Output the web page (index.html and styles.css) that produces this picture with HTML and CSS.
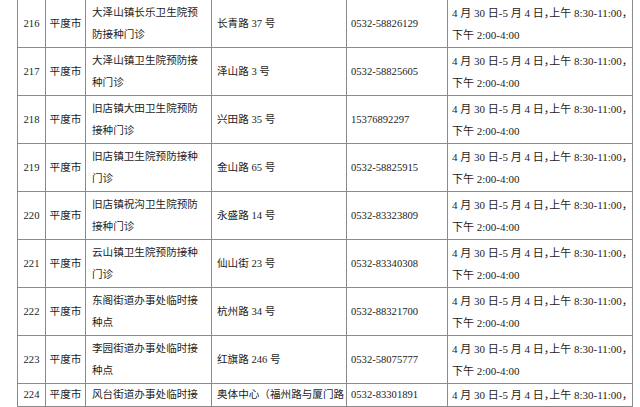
FILE: index.html
```html
<!DOCTYPE html>
<html lang="zh-CN">
<head>
<meta charset="utf-8">
<link rel="stylesheet" href="styles.css">
</head>
<body>
<table class="sched">
  <colgroup>
    <col class="c-no"><col class="c-city"><col class="c-name"><col class="c-addr"><col class="c-tel"><col class="c-time">
  </colgroup>
  <tbody>
    <tr><td class="no">216</td><td class="city">平度市</td><td class="name">大泽山镇长乐卫生院预防接种门诊</td><td class="addr">长青路 37 号</td><td class="tel">0532-58826129</td><td class="time">4 月 30 日-5 月 4 日，上午 8:30-11:00，<br>下午 2:00-4:00</td></tr>
    <tr><td class="no">217</td><td class="city">平度市</td><td class="name">大泽山镇卫生院预防接种门诊</td><td class="addr">泽山路 3 号</td><td class="tel">0532-58825605</td><td class="time">4 月 30 日-5 月 4 日，上午 8:30-11:00，<br>下午 2:00-4:00</td></tr>
    <tr><td class="no">218</td><td class="city">平度市</td><td class="name">旧店镇大田卫生院预防接种门诊</td><td class="addr">兴田路 35 号</td><td class="tel">15376892297</td><td class="time">4 月 30 日-5 月 4 日，上午 8:30-11:00，<br>下午 2:00-4:00</td></tr>
    <tr><td class="no">219</td><td class="city">平度市</td><td class="name">旧店镇卫生院预防接种门诊</td><td class="addr">金山路 65 号</td><td class="tel">0532-58825915</td><td class="time">4 月 30 日-5 月 4 日，上午 8:30-11:00，<br>下午 2:00-4:00</td></tr>
    <tr><td class="no">220</td><td class="city">平度市</td><td class="name">旧店镇祝沟卫生院预防接种门诊</td><td class="addr">永盛路 14 号</td><td class="tel">0532-83323809</td><td class="time">4 月 30 日-5 月 4 日，上午 8:30-11:00，<br>下午 2:00-4:00</td></tr>
    <tr><td class="no">221</td><td class="city">平度市</td><td class="name">云山镇卫生院预防接种门诊</td><td class="addr">仙山街 23 号</td><td class="tel">0532-83340308</td><td class="time">4 月 30 日-5 月 4 日，上午 8:30-11:00，<br>下午 2:00-4:00</td></tr>
    <tr><td class="no">222</td><td class="city">平度市</td><td class="name">东阁街道办事处临时接种点</td><td class="addr">杭州路 34 号</td><td class="tel">0532-88321700</td><td class="time">4 月 30 日-5 月 4 日，上午 8:30-11:00，<br>下午 2:00-4:00</td></tr>
    <tr><td class="no">223</td><td class="city">平度市</td><td class="name">李园街道办事处临时接种点</td><td class="addr">红旗路 246 号</td><td class="tel">0532-58075777</td><td class="time">4 月 30 日-5 月 4 日，上午 8:30-11:00，<br>下午 2:00-4:00</td></tr>
    <tr class="cut"><td class="no">224</td><td class="city">平度市</td><td class="name">风台街道办事处临时接</td><td class="addr">奥体中心（福州路与厦门路</td><td class="tel">0532-83301891</td><td class="time">4 月 30 日-5 月 4 日，上午 8:30-11:00，</td></tr>
  </tbody>
</table>
</body>
</html>
```

FILE: styles.css
```css
html, body {
  margin: 0;
  padding: 0;
  background: #ffffff;
  overflow: hidden;
}

.sched {
  margin: -1px 0 0 17px;
  border-collapse: collapse;
  table-layout: fixed;
  width: 616px;
  font-family: "Liberation Serif", "Noto Sans CJK SC", serif;
  font-size: 10.6px;
  line-height: 22px;
  color: #1c1c1c;
}

.c-no { width: 28px; }
.c-city { width: 40px; }
.c-name { width: 126px; }
.c-addr { width: 135px; }
.c-tel { width: 101px; }
.c-time { width: 185px; }

.sched td {
  border: 1px solid #8a8a8a;
  height: 47px;
  padding: 0 4px;
  vertical-align: middle;
  white-space: normal;
  word-break: break-all;
}

.sched td.no,
.sched td.city {
  text-align: center;
  padding-left: 0;
  padding-right: 0;
}

.sched td.name {
  padding-left: 6px;
  padding-right: 6px;
}

.sched td.addr {
  padding-left: 5px;
}

.sched td.time {
  font-size: 11px;
  white-space: nowrap;
  overflow: hidden;
  font-feature-settings: "halt";
}

.sched tr.cut td {
  height: 22px;
  line-height: 20px;
  white-space: nowrap;
  overflow: hidden;
}
```
